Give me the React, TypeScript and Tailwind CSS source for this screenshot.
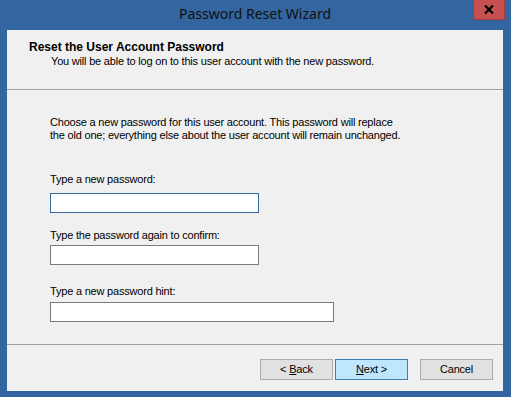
import React from "react";

const sans = { fontFamily: '"Liberation Sans", Arial, sans-serif' };

function Btn({ children, primary }: { children: React.ReactNode; primary?: boolean }) {
  return (
    <div
      className={
        "w-[73px] h-[21px] flex items-center justify-center text-[11px] tracking-[-0.2px] text-black border " +
        (primary ? "bg-[#bee6fd] border-[#3c7fb1]" : "bg-[#e1e1e1] border-[#adadad]")
      }
    >
      <span>{children}</span>
    </div>
  );
}

export default function App() {
  return (
    <div className="w-[511px] h-[397px] bg-[#3366a1] flex flex-col pl-[7px] pr-[8px] pb-[6px] overflow-hidden" style={sans}>
      <div className="h-[30px] relative flex items-start justify-center">
        <div className="mt-[4px] text-[14px] leading-[20px] text-[#111]" style={{ fontFamily: '"Noto Sans", sans-serif' }}>
          Password Reset Wizard
        </div>
        <div className="absolute top-0 right-[-2px] w-[32px] h-[20px] bg-[#c75050] border border-[#9f3b3b] border-t-0 flex items-center justify-center">
          <svg width="10" height="9" viewBox="0 0 10 9">
            <path d="M1 0.5 L9 8.5 M9 0.5 L1 8.5" stroke="#000" strokeWidth="2.2" />
          </svg>
        </div>
      </div>
      <div className="flex-1 bg-[#f0f0f0] flex flex-col">
        <div className="h-[60px] border-b border-[#a0a0a0] pt-[10px] pl-[22px]">
          <div className="text-[12px] leading-[14px] font-bold text-black">Reset the User Account Password</div>
          <div className="mt-[1px] pl-[22px] text-[11px] leading-[13px] tracking-[-0.2px] text-black">
            You will be able to log on to this user account with the new password.
          </div>
        </div>
        <div className="flex-1 flex flex-col pl-[43px] text-[11px] leading-[13px] tracking-[-0.2px] text-black">
          <div className="mt-[26px]">
            Choose a new password for this user account. This password will replace
            <br />
            the old one; everything else about the user account will remain unchanged.
          </div>
          <div className="mt-[31px]">Type a new password:</div>
          <div className="mt-[7px] w-[209px] h-[20px] bg-white border border-[#3a6b9f]" />
          <div className="mt-[16px]">Type the password again to confirm:</div>
          <div className="mt-[3px] w-[209px] h-[20px] bg-white border border-[#7a7a7a]" />
          <div className="mt-[20px]">Type a new password hint:</div>
          <div className="mt-[4px] w-[284px] h-[20px] bg-white border border-[#7a7a7a]" />
        </div>
        <div className="h-[47px] border-t border-[#a0a0a0] flex items-start justify-end pt-[14px] pr-[10px]">
          <Btn>
            &lt; <span className="underline">B</span>ack
          </Btn>
          <div className="w-[2px]" />
          <Btn primary>
            <span className="underline">N</span>ext &gt;
          </Btn>
          <div className="w-[12px]" />
          <Btn>Cancel</Btn>
        </div>
      </div>
    </div>
  );
}
